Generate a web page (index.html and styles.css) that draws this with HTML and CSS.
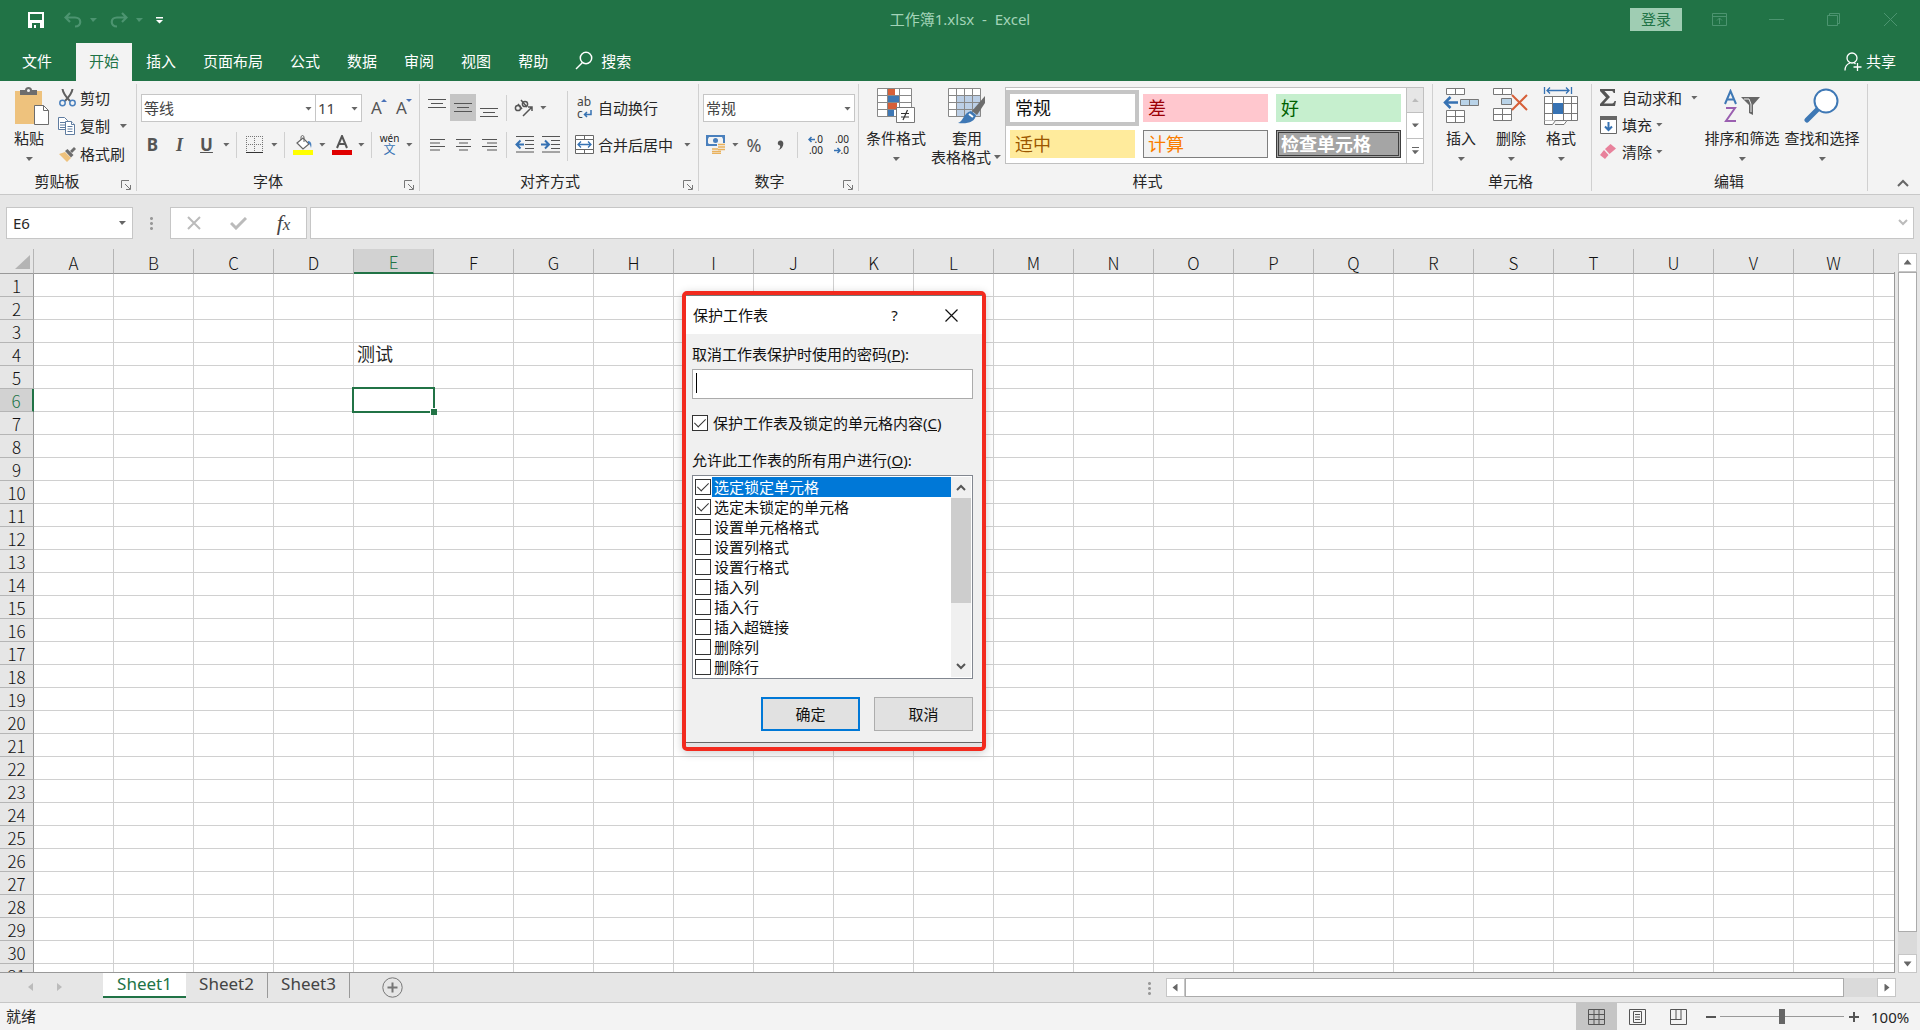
FILE: index.html
```html
<!DOCTYPE html>
<html lang="zh-CN">
<head>
  <meta charset="UTF-8">
  <title>工作簿1.xlsx - Excel</title>
  <meta name="viewport" content="width=device-width, initial-scale=1.0">
  <link rel="stylesheet" href="styles.css">
</head>
<body>
  <header class="titlebar">
    <div class="quick-access">
      <button class="quick save" aria-label="保存"><svg width="16" height="16" viewBox="0 0 16 16"><path d="M0 0h16v16H0z M2 2v6h12V2z M4 11v5h2v-3h2v3h4v-5z" fill="#fff" fill-rule="evenodd"/></svg></button>
      <button class="quick" aria-label="撤消"><svg width="18" height="16" viewBox="0 0 18 16"><path d="M6 1L1.500 5.500L6 10M2 5.500h9c7 0 7 9 0 9" fill="none" stroke="#4c9470" stroke-width="2.200"/></svg></button>
      <span class="caret dim"></span>
      <button class="quick" aria-label="恢复"><svg width="18" height="16" viewBox="0 0 18 16"><path d="M12 1l4.500 4.500L12 10M16 5.500H7c-7 0-7 9 0 9" fill="none" stroke="#4c9470" stroke-width="2.200"/></svg></button>
      <span class="caret dim"></span>
      <button class="quick" aria-label="自定义快速访问工具栏"><svg width="7" height="7" viewBox="0 0 7 7"><path d="M0 0h7v1.500H0zM0 3h7L3.500 6.500z" fill="#fff"/></svg></button>
    </div>
    <div class="doc-title">工作簿1.xlsx&nbsp; -&nbsp; Excel</div>
    <div class="window-controls">
      <button class="login">登录</button>
      <button class="win" aria-label="功能区显示选项"><svg width="15" height="13" viewBox="0 0 15 13" fill="none" stroke="#4c9470"><path d="M.5.5h14v12H.5zM.5 3.500h14M7.500 11V5M5 7.500L7.500 5L10 7.500"/></svg></button>
      <button class="win" aria-label="最小化"><svg width="15" height="13" viewBox="0 0 15 13" stroke="#4c9470"><path d="M0 6.500h15"/></svg></button>
      <button class="win" aria-label="还原"><svg width="13" height="13" viewBox="0 0 13 13" fill="none" stroke="#4c9470"><path d="M.5 2.500h10v10H.5zM2.500 2.500v-2h10v10h-2"/></svg></button>
      <button class="win" aria-label="关闭"><svg width="13" height="13" viewBox="0 0 13 13" stroke="#4c9470"><path d="M0 0l13 13M13 0L0 13"/></svg></button>
    </div>
  </header>

  <nav class="tabs">
    <a href="#" class="tab file">文件</a>
    <a href="#" class="tab active">开始</a>
    <a href="#" class="tab">插入</a>
    <a href="#" class="tab">页面布局</a>
    <a href="#" class="tab">公式</a>
    <a href="#" class="tab">数据</a>
    <a href="#" class="tab">审阅</a>
    <a href="#" class="tab">视图</a>
    <a href="#" class="tab">帮助</a>
    <a href="#" class="tab search"><svg width="18" height="19" viewBox="0 0 18 19" fill="none" stroke="#fff" stroke-width="1.500"><circle cx="11" cy="7" r="5.700"/><path d="M7.500 11.500L1 18"/></svg>搜索</a>
    <a href="#" class="share"><svg width="18" height="19" viewBox="0 0 18 19" fill="none" stroke="#fff" stroke-width="1.300"><circle cx="8" cy="6" r="5"/><path d="M1 18.500c0-4 2-6.500 5-7.500M10 10.500l1.500 1.500M13.500 11v8M9.500 15h8"/></svg>共享</a>
  </nav>

  <section class="ribbon">
    <div class="group clipboard">
      <div class="group-body">
        <button class="big paste">
          <span class="big-icon"><svg width="36" height="39" viewBox="0 0 36 39"><path d="M1 4h27v33H1z" fill="#eec27d"/><path d="M6 3h5c0-4 7-4 7 0h5v5H6z" fill="#6d6d6d"/><circle cx="14.500" cy="3.500" r="1.500" fill="#f3f3f3"/><path d="M20.500 18.500h9l5 5v14h-14z" fill="#fff" stroke="#6d6d6d"/><path d="M29.500 18.500v5h5" fill="none" stroke="#6d6d6d"/></svg></span>
          <span>粘贴</span>
          <span class="caret"></span>
        </button>
        <div class="small-list">
          <button class="small"><span class="small-icon"><svg width="17" height="18" viewBox="0 0 17 18" fill="none"><path d="M3.500 0C4 4 7 8 11 12M13.500 0C13 4 10 8 6 12" stroke="#5f5f5f" stroke-width="2"/><circle cx="3.500" cy="14" r="2.700" stroke="#4a80bd" stroke-width="1.500"/><circle cx="13.500" cy="14" r="2.700" stroke="#4a80bd" stroke-width="1.500"/></svg></span>剪切</button>
          <button class="small"><span class="small-icon"><svg width="18" height="18" viewBox="0 0 18 18" fill="#fff" stroke="#5f7ca0"><path d="M.5.5h6l3 3v9h-9zM2 5.500h5M2 8h5M2 10.500h5"/><path d="M7.500 4.500h6l3 3v10h-9z"/><path d="M13.500 4.500v3h3M9.500 9.500h5M9.500 12h5M9.500 14.500h5"/></svg></span>复制<span class="caret"></span></button>
          <button class="small"><span class="small-icon"><svg width="17" height="15" viewBox="0 0 17 15"><path d="M0 7l6-2 6 6-4 4z" fill="#eec27d"/><path d="M6 4l2.500-2 6 6L12 10.500z" fill="#6d6d6d"/><path d="M11 4l4-4 2 2-4 4z" fill="#6d6d6d"/></svg></span>格式刷</button>
        </div>
      </div>
      <div class="group-name">剪贴板<button class="launcher" aria-label="剪贴板选项"><svg width="10" height="10" viewBox="0 0 10 10" fill="none" stroke="#777"><path d="M.5 8V.5H8M4 4l5 5M9.500 5v4.500H5"/></svg></button></div>
    </div>

    <div class="group font">
      <div class="group-body rows">
        <div class="row">
          <span class="combo font-name"><select aria-label="字体"><option>等线</option></select></span><span class="combo font-size"><select aria-label="字号"><option>11</option></select></span>
          <button class="tool sizer" aria-label="增大字号"><span class="glyph">A</span><span class="grow"></span></button>
          <button class="tool sizer" aria-label="减小字号"><span class="glyph">A</span><span class="shrink"></span></button>
        </div>
        <div class="row">
          <button class="tool glyph heavy">B</button>
          <button class="tool glyph italic">I</button>
          <button class="tool glyph under">U</button>
          <span class="caret"></span><span class="sep"></span>
          <button class="tool" aria-label="边框"><svg width="18" height="18" viewBox="0 0 18 18" fill="none" stroke="#777"><path d="M.5 0v16M8.500 0v16M16.500 0v16M0 .5h17M0 8.500h17" stroke-dasharray="1 1"/><path d="M0 16.500h17" stroke="#333"/></svg></button>
          <span class="caret"></span><span class="sep"></span>
          <button class="tool" aria-label="填充颜色"><svg width="20" height="20" viewBox="0 0 20 20"><path d="M0 15h20v5H0z" fill="#ff0"/><path d="M4 8l6-5 6 6-6 5z" fill="#fff" stroke="#666" stroke-width="1.200"/><path d="M8 5V1.500q1.500-2 3 0V7" fill="none" stroke="#666"/><path d="M15 6c3 0 4 3 3 7-1-3-1-4-3-5z" fill="#4a80bd"/></svg></button>
          <span class="caret"></span>
          <button class="tool" aria-label="字体颜色"><svg width="20" height="20" viewBox="0 0 20 20"><path d="M0 15h20v5H0z" fill="#e00000"/><path d="M5 13l5-12 5 12M7 9h6" fill="none" stroke="#555" stroke-width="2"/></svg></button>
          <span class="caret"></span><span class="sep"></span>
          <button class="tool phonetic"><span>wén</span><span class="wen">文</span></button>
          <span class="caret"></span>
        </div>
      </div>
      <div class="group-name">字体<button class="launcher" aria-label="字体选项"><svg width="10" height="10" viewBox="0 0 10 10" fill="none" stroke="#777"><path d="M.5 8V.5H8M4 4l5 5M9.500 5v4.500H5"/></svg></button></div>
    </div>

    <div class="group align">
      <div class="group-body">
        <div class="rows">
          <div class="row">
            <button class="tool" aria-label="顶端对齐"><svg width="18" height="20" viewBox="0 0 18 20" stroke="#555"><path d="M0 1.500h18M3 5.500h12M0 9.500h18"/></svg></button>
            <button class="tool pressed" aria-label="垂直居中"><svg width="18" height="20" viewBox="0 0 18 20" stroke="#555"><path d="M0 5.500h18M3 9.500h12M0 13.500h18"/></svg></button>
            <button class="tool" aria-label="底端对齐"><svg width="18" height="20" viewBox="0 0 18 20" stroke="#555"><path d="M0 10.500h18M3 14.500h12M0 18.500h18"/></svg></button>
            <span class="sep"></span>
            <button class="tool" aria-label="方向"><svg width="20" height="18" viewBox="0 0 20 18" fill="none" stroke="#555" stroke-width="1.500"><circle cx="4" cy="9" r="2.600"/><path d="M4 5l4 5M7 1l6 7M9 17L18 8M14 8h4v4"/><circle cx="11" cy="5" r="2.600"/></svg></button>
            <span class="caret"></span>
          </div>
          <div class="row">
            <button class="tool" aria-label="左对齐"><svg width="15" height="12" viewBox="0 0 15 12" stroke="#555"><path d="M0 .5h15M0 4h10M0 7.500h15M0 11h10"/></svg></button>
            <button class="tool" aria-label="居中"><svg width="15" height="12" viewBox="0 0 15 12" stroke="#555"><path d="M0 .5h15M3 4h9M0 7.500h15M3 11h9"/></svg></button>
            <button class="tool" aria-label="右对齐"><svg width="15" height="12" viewBox="0 0 15 12" stroke="#555"><path d="M0 .5h15M5 4h10M0 7.500h15M5 11h10"/></svg></button>
            <span class="sep"></span>
            <button class="tool" aria-label="减少缩进量"><svg width="19" height="17" viewBox="0 0 19 17" stroke="#555" fill="none"><path d="M1 .5h18M10 4.500h9M10 8.500h9M10 12.500h9M1 16h18"/><path d="M9 8.500H2M5.500 4.500l-4 4 4 4" stroke="#3672b3" stroke-width="2"/></svg></button>
            <button class="tool" aria-label="增加缩进量"><svg width="19" height="17" viewBox="0 0 19 17" stroke="#555" fill="none"><path d="M1 .5h18M10 4.500h9M10 8.500h9M10 12.500h9M1 16h18"/><path d="M0 8.500h7M4 4.500l4 4-4 4" stroke="#3672b3" stroke-width="2"/></svg></button>
          </div>
        </div>
        <span class="sep tall"></span>
        <div class="rows wrap-rows">
          <div class="row"><button class="small wide"><span class="small-icon wrap-icon"><span>ab</span><span>c<svg width="9" height="8" viewBox="0 0 9 8" fill="none" stroke="#3672b3" stroke-width="1.500"><path d="M8 0v4.500H1.500M4 2L1.500 4.500L4 7"/></svg></span></span>自动换行</button></div>
          <div class="row"><button class="small wide"><span class="small-icon"><svg width="19" height="19" viewBox="0 0 19 19" fill="#fff" stroke="#666"><path d="M.5.5h18v18H.5zM9.500.5v4M9.500 14.500v4"/><path d="M.5 4.500h18v10H.5z"/><path d="M3 9.500h13M6 6.500l-3 3 3 3M13 6.500l3 3-3 3" fill="none" stroke="#3672b3" stroke-width="1.300"/></svg></span>合并后居中<span class="caret"></span></button></div>
        </div>
      </div>
      <div class="group-name">对齐方式<button class="launcher" aria-label="对齐选项"><svg width="10" height="10" viewBox="0 0 10 10" fill="none" stroke="#777"><path d="M.5 8V.5H8M4 4l5 5M9.500 5v4.500H5"/></svg></button></div>
    </div>

    <div class="group number">
      <div class="group-body rows">
        <div class="row"><span class="combo number-format"><select aria-label="数字格式"><option>常规</option></select></span></div>
        <div class="row">
          <button class="tool" aria-label="会计数字格式"><svg width="20" height="19" viewBox="0 0 20 19"><path d="M0 0h19v11H0z" fill="#4a80bd"/><path d="M3 2h13l1 2v4l-1 1H3L2 8V4z" fill="#f3f3f3"/><circle cx="9.500" cy="5.500" r="2.500" fill="#4a80bd"/><path d="M11 8h8v9h-4v2H6v-6h5z" fill="#f3f3f3"/><path d="M12 9.500h7M12 12h7M12 14.500h7M6 14h6M6 16.500h9M6 18.500h9" stroke="#e9b15c" stroke-width="1.500"/></svg></button>
          <span class="caret"></span>
          <button class="tool percent">%</button>
          <button class="tool" aria-label="千位分隔样式"><svg width="7" height="10" viewBox="0 0 7 10"><path d="M1 10c2-1 2.500-3 2-4.500C-.500 5 .500.500 3.500.500c4.500 0 3.500 8-2 9.500z" fill="#555"/></svg></button>
          <span class="sep"></span>
          <button class="tool decimals" aria-label="增加小数位数"><span><svg width="7" height="7" viewBox="0 0 7 7" fill="none" stroke="#3672b3" stroke-width="1.500"><path d="M7 3.500H1M3.500 1L1 3.500L3.500 6"/></svg>.0</span><span>.00</span></button>
          <button class="tool decimals" aria-label="减少小数位数"><span>.00</span><span><svg width="7" height="7" viewBox="0 0 7 7" fill="none" stroke="#3672b3" stroke-width="1.500"><path d="M0 3.500h6M3.500 1L6 3.500L3.500 6"/></svg>.0</span></button>
        </div>
      </div>
      <div class="group-name">数字<button class="launcher" aria-label="数字选项"><svg width="10" height="10" viewBox="0 0 10 10" fill="none" stroke="#777"><path d="M.5 8V.5H8M4 4l5 5M9.500 5v4.500H5"/></svg></button></div>
    </div>

    <div class="group styles">
      <div class="group-body">
        <button class="big conditional">
          <span class="big-icon"><svg width="38" height="36" viewBox="0 0 38 36"><path d="M.5.5h34v28H.5z" fill="#fff"/><path d="M11 0h7v7h-7zM11 14h9v7h-9z" fill="#d65f38"/><path d="M11 7h11v7H11zM11 21h6v7h-6z" fill="#3e78b5"/><path d="M.5.5h34v28H.5zM10.500.5v28M22.500.5v28M.5 7.500h34M.5 14.500h34M.5 21.500h34" fill="none" stroke="#888"/><path d="M19.500 19.500h18v15h-18z" fill="#fff" stroke="#777"/><path d="M24 25.500h8M24 29h8M30.500 22L26 32" stroke="#333" stroke-width="1.200"/></svg></span>
          <span>条件格式</span>
          <span class="caret"></span>
        </button>
        <button class="big table-format">
          <span class="big-icon"><svg width="38" height="36" viewBox="0 0 38 36"><path d="M.5.5h32v28H.5z" fill="#fff"/><path d="M8.500 7.500h24v21h-24z" fill="#bccfe6"/><path d="M.5.5h32v28H.5zM8.500.5v28M16.500.5v28M24.500.5v28M.5 7.500h32M.5 14.500h32M.5 21.500h32" fill="none" stroke="#888"/><path d="M37 8v7l-8 12-5-4z" fill="#6d6d6d"/><path d="M23 23l5 4c-1 7-8 9-18 8 6-2 5-10 13-12z" fill="#3e78b5"/><path d="M21 26l4 3" stroke="#fff" stroke-width="2"/></svg></span>
          <span>套用</span>
          <span class="second-line">表格格式<span class="caret"></span></span>
        </button>
        <div class="gallery">
          <div class="gallery-cells">
            <button class="swatch selected">常规</button>
            <button class="swatch bad">差</button>
            <button class="swatch good">好</button>
            <button class="swatch neutral">适中</button>
            <button class="swatch calc">计算</button>
            <button class="swatch check">检查单元格</button>
          </div>
          <div class="gallery-scroll">
            <button class="off" aria-label="上一行"><span class="caret up"></span></button>
            <button aria-label="下一行"><span class="caret"></span></button>
            <button class="more" aria-label="其他"><span class="caret"></span></button>
          </div>
        </div>
      </div>
      <div class="group-name">样式</div>
    </div>

    <div class="group cells">
      <div class="group-body">
        <button class="big">
          <span class="big-icon"><svg width="36" height="36" viewBox="0 0 36 36" fill="#fff" stroke="#777"><path d="M3.500.5h18v6h-18zM12.500.5v6M3.500 22.500h18v12h-18zM12.500 22.500v12M3.500 28.500h18"/><path d="M17.500 11.500h18v6h-18zM26.500 11.500v6" fill="#b9d3e8"/><path d="M15 14.500H2M7.500 9l-5.500 5.500L7.500 20" fill="none" stroke="#3672b3" stroke-width="2.500"/></svg></span>
          <span>插入</span>
          <span class="caret"></span>
        </button>
        <button class="big">
          <span class="big-icon"><svg width="36" height="36" viewBox="0 0 36 36" fill="#fff" stroke="#777"><path d="M.5.5h18v6H.5zM9.500.5v6M.5 20.500h18v12H.5zM9.500 20.500v12M.5 26.500h18"/><path d="M8.500 10.500h10v6h-10z" fill="#b9d3e8"/><path d="M19 7l15 15M34 7L19 22" fill="none" stroke="#d65f38" stroke-width="2"/></svg></span>
          <span>删除</span>
          <span class="caret"></span>
        </button>
        <button class="big">
          <span class="big-icon"><svg width="36" height="38" viewBox="0 0 36 38" fill="#fff" stroke="#777"><path d="M1.500 9.500h33v24h-33zM9.500 9.500v24M20.500 9.500v24M28.500 9.500v24M1.500 16.500h33M1.500 26.500h33"/><path d="M10 16h10v11H10z" fill="#3672b3" stroke="none"/><path d="M1.500 33.500v4h8l3-4M12 37.500h9l3-4" /><path d="M1.500 0v7M28.500 0v7M4 3.500h22M7 .5l-3 3 3 3M23 .5l3 3-3 3" fill="none" stroke="#3672b3" stroke-width="1.300"/></svg></span>
          <span>格式</span>
          <span class="caret"></span>
        </button>
      </div>
      <div class="group-name">单元格</div>
    </div>

    <div class="group editing">
      <div class="group-body">
        <div class="small-list edit-list">
          <button class="small"><span class="small-icon"><svg width="16" height="17" viewBox="0 0 16 17"><path d="M0 0h15v4h-1.500c0-1.500-1-2-2.500-2H4.500L10 8l-6 6.500h7c2 0 3-.500 3.500-2.500H16l-1 5H0v-2l6-6.500L0 2z" fill="#555"/></svg></span>自动求和<span class="caret"></span></button>
          <button class="small"><span class="small-icon"><svg width="17" height="18" viewBox="0 0 17 18"><path d="M.5 1.500h16v16H.5z" fill="#fff" stroke="#666"/><path d="M0 0h17v4H0z" fill="#666"/><path d="M8.500 6v8M5 10.500L8.500 14L12 10.500" fill="none" stroke="#3672b3" stroke-width="2"/></svg></span>填充<span class="caret"></span></button>
          <button class="small"><span class="small-icon"><svg width="16" height="15" viewBox="0 0 16 15"><path d="M10.500 0L16 4.500L9.500 10L5 5z" fill="#e8819b"/><path d="M4 6l4.500 5L5 15 0 11z" fill="#e8819b"/></svg></span>清除<span class="caret"></span></button>
        </div>
        <button class="big sort">
          <span class="big-icon"><svg width="36" height="34" viewBox="0 0 36 34" fill="none"><path d="M1 15L6.500 2L12 15M3 10.500h7" stroke="#3e78b5" stroke-width="2"/><path d="M2 19h9L2 32h10" stroke="#9a5fb0" stroke-width="2"/><path d="M17 8h19l-7 8v10l-4-2v-8z" fill="#666"/><path d="M20 10h5l2 5v8" stroke="#eee"/></svg></span>
          <span>排序和筛选</span>
          <span class="caret"></span>
        </button>
        <button class="big find">
          <span class="big-icon"><svg width="36" height="36" viewBox="0 0 36 36"><path d="M14 21L3 32" stroke="#3e78b5" stroke-width="5" stroke-linecap="round"/><circle cx="22" cy="13" r="11.500" fill="#fff" stroke="#3e78b5" stroke-width="2"/></svg></span>
          <span>查找和选择</span>
          <span class="caret"></span>
        </button>
      </div>
      <div class="group-name">编辑</div>
    </div>
    <button class="collapse" aria-label="折叠功能区"><svg width="12" height="8" viewBox="0 0 12 8" fill="none" stroke="#666" stroke-width="2"><path d="M1 7l5-5 5 5"/></svg></button>
  </section>

  <section class="formula-bar">
    <div class="name-box"><input type="text" value="E6" aria-label="名称框"><span class="caret"></span></div>
    <span class="dots"></span>
    <div class="fx-buttons">
      <button aria-label="取消"><svg width="14" height="14" viewBox="0 0 14 14" stroke="#bbb" stroke-width="2"><path d="M1 1l12 12M13 1L1 13"/></svg></button>
      <button aria-label="输入"><svg width="17" height="13" viewBox="0 0 17 13" fill="none" stroke="#bbb" stroke-width="3"><path d="M1 6l5 5L16 1"/></svg></button>
      <button class="fx" aria-label="插入函数"><i>f</i><i class="sub">x</i></button>
    </div>
    <div class="formula"><input type="text" aria-label="编辑栏"><svg width="10" height="8" viewBox="0 0 10 8" fill="none" stroke="#bbb" stroke-width="2"><path d="M1 1l4 4 4-4"/></svg></div>
  </section>

  <main class="sheet">
    <div class="grid"><table id="cells"></table></div>
    <div class="vscroll">
      <button aria-label="向上滚动"><span class="arrow up"></span></button>
      <div class="thumb"></div>
      <div class="track"></div>
      <button aria-label="向下滚动"><span class="arrow down"></span></button>
    </div>
  </main>

  <section class="sheet-bar">
    <div class="sheet-nav"><span class="arrow left"></span><span class="arrow right"></span></div>
    <a href="#" class="sheet-tab current">Sheet1</a>
    <a href="#" class="sheet-tab">Sheet2</a>
    <a href="#" class="sheet-tab">Sheet3</a>
    <button class="add-sheet" aria-label="新工作表"><svg width="21" height="21" viewBox="0 0 21 21" fill="none" stroke="#777"><circle cx="10.500" cy="10.500" r="9.700"/><path d="M10.500 5.500v10M5.500 10.500h10" stroke-width="2"/></svg></button>
    <span class="dots"></span>
    <div class="hscroll">
      <button aria-label="向左滚动"><span class="arrow left"></span></button>
      <div class="thumb"></div>
      <div class="track"></div>
      <button aria-label="向右滚动"><span class="arrow right"></span></button>
    </div>
  </section>

  <footer class="status">
    <span class="ready">就绪</span>
    <button class="view on" aria-label="普通"><svg width="17" height="16" viewBox="0 0 17 16" fill="none" stroke="#555"><path d="M.5.5h16v15H.5zM6 .5v15M11 .5v15M.5 5.500h16M.5 10.500h16"/></svg></button>
    <button class="view" aria-label="页面布局"><svg width="17" height="16" viewBox="0 0 17 16" fill="none" stroke="#555"><path d="M.5.5h16v15H.5zM4.500 2.500h8v11h-8zM6 5.500h5M6 8h5M6 10.500h5"/></svg></button>
    <button class="view" aria-label="分页预览"><svg width="17" height="16" viewBox="0 0 17 16" fill="none" stroke="#555"><path d="M.5.5h16v15H.5zM6 .5v10M11 .5v10M.5 10.500h11"/></svg></button>
    <div class="zoom">
      <button aria-label="缩小"><svg width="10" height="10" viewBox="0 0 10 10" stroke="#555" stroke-width="2"><path d="M0 5h10"/></svg></button>
      <input type="range" min="10" max="190" value="100" aria-label="缩放">
      <button aria-label="放大"><svg width="10" height="10" viewBox="0 0 10 10" stroke="#555" stroke-width="2"><path d="M0 5h10M5 0v10"/></svg></button>
      <span class="zoom-value">100%</span>
    </div>
  </footer>

  <form class="dialog" role="dialog" aria-labelledby="dialogTitle">
    <div class="dialog-title">
      <span id="dialogTitle">保护工作表</span>
      <button type="button" class="help">?</button>
      <button type="button" class="close" aria-label="关闭"><svg width="13" height="13" viewBox="0 0 13 13" stroke="#111" stroke-width="1.200"><path d="M.5.5l12 12M12.500.5l-12 12"/></svg></button>
    </div>
    <div class="dialog-body">
      <label for="password">取消工作表保护时使用的密码(<u>P</u>):</label>
      <div class="password-box"><span class="cursor"></span><input type="password" id="password"></div>
      <label class="protect"><input type="checkbox" checked>保护工作表及锁定的单元格内容(<u>C</u>)</label>
      <div class="allow" id="allowLabel">允许此工作表的所有用户进行(<u>O</u>):</div>
      <div class="permissions" role="group" aria-labelledby="allowLabel">
        <div class="permission-list">
          <label class="picked"><input type="checkbox" checked><span>选定锁定单元格</span></label>
          <label><input type="checkbox" checked><span>选定未锁定的单元格</span></label>
          <label><input type="checkbox"><span>设置单元格格式</span></label>
          <label><input type="checkbox"><span>设置列格式</span></label>
          <label><input type="checkbox"><span>设置行格式</span></label>
          <label><input type="checkbox"><span>插入列</span></label>
          <label><input type="checkbox"><span>插入行</span></label>
          <label><input type="checkbox"><span>插入超链接</span></label>
          <label><input type="checkbox"><span>删除列</span></label>
          <label><input type="checkbox"><span>删除行</span></label>
        </div>
        <div class="list-scroll">
          <button type="button" aria-label="向上"><svg width="10" height="7" viewBox="0 0 10 7" fill="none" stroke="#555" stroke-width="2"><path d="M1 6l4-4 4 4"/></svg></button>
          <div class="list-thumb"></div>
          <button type="button" aria-label="向下"><svg width="10" height="7" viewBox="0 0 10 7" fill="none" stroke="#555" stroke-width="2"><path d="M1 1l4 4 4-4"/></svg></button>
        </div>
      </div>
      <div class="dialog-buttons">
        <button type="button" class="ok">确定</button>
        <button type="button">取消</button>
      </div>
    </div>
  </form>

  <script src="script.js"></script>
</body>
</html>
```

FILE: styles.css
```css
* {
  box-sizing: border-box;
}
body {
  margin: 0;
  height: 100vh;
  display: flex;
  flex-direction: column;
  overflow: hidden;
  background-color: #e6e6e6;
  color: #262626;
  font-family: "Noto Sans", "Noto Sans CJK SC", sans-serif;
  font-size: 15px;
  line-height: 20px;
}
button, input, select {
  font: inherit;
  color: inherit;
  margin: 0;
  padding: 0;
  border: none;
  background: none;
}
button {
  display: flex;
  align-items: center;
  justify-content: center;
}
a {
  color: inherit;
  text-decoration: none;
}
svg {
  display: block;
  flex: none;
}

/* small drop-down arrows */
.caret {
  flex: none;
  width: 12px;
  height: 4px;
  background-color: #666;
  clip-path: polygon(3px 0, 10px 0, 6px 4px);
}
.caret.up {
  background-color: #bbb;
  clip-path: polygon(3px 4px, 10px 4px, 6px 0);
}
.caret.dim {
  background-color: #4c9470;
}
.arrow {
  width: 8px;
  height: 8px;
  background-color: #666;
}
.arrow.up { clip-path: polygon(0 6px, 8px 6px, 4px 1px); }
.arrow.down { clip-path: polygon(0 2px, 8px 2px, 4px 7px); }
.arrow.left { clip-path: polygon(6px 0, 6px 8px, 1px 4px); }
.arrow.right { clip-path: polygon(2px 0, 2px 8px, 7px 4px); }

/* title bar */
.titlebar {
  display: grid;
  grid-template-columns: 1fr auto 1fr;
  align-items: center;
  height: 38px;
  background-color: #217346;
}
.quick-access {
  display: flex;
  align-items: center;
  padding: 2px 0 0 28px;
}
.quick + .quick {
  margin-left: 20px;
}
.quick-access .caret {
  margin: 0 11px 0 5px;
}
.doc-title {
  color: #a3d3b8;
}
.window-controls {
  display: flex;
  justify-content: flex-end;
  align-items: center;
  padding-right: 1px;
}
.login {
  width: 52px;
  height: 23px;
  margin-right: 9px;
  background-color: #9fcdb3;
  color: #217346;
}
.win {
  width: 57px;
  height: 30px;
}

/* ribbon tabs */
.tabs {
  display: flex;
  align-items: stretch;
  gap: 1px;
  height: 43px;
  padding-top: 5px;
  background-color: #217346;
  color: #fff;
}
.tab {
  display: flex;
  align-items: center;
  padding: 0 13px 3px;
}
.tab.file {
  padding: 0 23px 3px 22px;
}
.tab.active {
  background-color: #f3f3f3;
  color: #217346;
}
.tab.search {
  gap: 8px;
}
.share {
  display: flex;
  align-items: center;
  gap: 4px;
  margin-left: auto;
  padding: 0 24px 2px 0;
}

/* ribbon */
.ribbon {
  display: flex;
  padding: 3px 0;
  background-color: #f3f3f3;
  border-bottom: 1px solid #c8c8c8;
}
.group {
  display: flex;
  flex-direction: column;
  flex: none;
  height: 107px;
  border-right: 1px solid #d0d0d0;
}
.group-body {
  display: flex;
  flex: 1;
}
.group-name {
  position: relative;
  padding-bottom: 2px;
  line-height: 16px;
  text-align: center;
}
.launcher {
  position: absolute;
  right: 5px;
  bottom: 1px;
}
.rows {
  display: flex;
  flex-direction: column;
  gap: 10px;
  padding-top: 10px;
}
.row {
  display: flex;
  align-items: center;
  height: 27px;
}
.big {
  flex-direction: column;
  justify-content: flex-start;
  width: 50px;
  line-height: 20px;
  white-space: nowrap;
}
.big-icon {
  display: flex;
  align-items: center;
  justify-content: center;
  height: 44px;
}
.big > .caret {
  margin-top: 9px;
}
.small {
  height: 28px;
  justify-content: flex-start;
  white-space: nowrap;
}
.small-icon {
  display: flex;
  align-items: center;
  justify-content: center;
  width: 18px;
  margin-right: 4px;
}
.sep {
  flex: none;
  width: 1px;
  height: 26px;
  margin: 0 4px;
  background-color: #d0d0d0;
}
.sep.tall {
  height: 70px;
  margin: 7px 4px 0;
}
.tool {
  flex: none;
  width: 26px;
  height: 27px;
  position: relative;
}
.tool.pressed {
  background-color: #c5c5c5;
}
.glyph {
  font-size: 17px;
  color: #555;
}
.heavy {
  font-weight: bold;
}
.italic {
  font-family: "Liberation Serif", serif;
  font-style: italic;
  font-weight: bold;
  font-size: 18px;
}
.under {
  font-weight: bold;
  text-decoration: underline;
}
.combo {
  position: relative;
  display: block;
}
.combo select {
  appearance: none;
  width: 100%;
  height: 28px;
  padding-left: 2px;
  background-color: #fff;
  border: 1px solid #c6c6c6;
  border-radius: 0;
  color: #444;
}
.combo::after {
  content: "";
  position: absolute;
  right: 4px;
  top: 13px;
  width: 7px;
  height: 4px;
  background-color: #666;
  clip-path: polygon(0 0, 100% 0, 50% 100%);
}
.clipboard {
  width: 137px;
}
.clipboard .group-body {
  padding-left: 4px;
}
.paste .big-icon {
  padding-left: 6px;
}
.paste + .small-list {
  padding-left: 4px;
}
.clipboard .group-name {
  padding-right: 22px;
}
.clipboard .small .caret {
  margin-left: 7px;
}
.font {
  width: 283px;
}
.font .tool {
  width: 27px;
}
.font .row {
  padding-left: 2px;
}
.font-name {
  width: 175px;
  margin-left: 2px;
}
.font-size {
  width: 47px;
  margin: 0 2px 0 -1px;
}
.font .sizer {
  width: 25px;
}
.font .group-name {
  padding-right: 20px;
}
.grow, .shrink {
  position: absolute;
  top: 5px;
  right: 2px;
  width: 6px;
  height: 3px;
  background-color: #4a72b8;
}
.grow { clip-path: polygon(0 100%, 100% 100%, 50% 0); }
.shrink { clip-path: polygon(0 0, 100% 0, 50% 100%); }
.phonetic {
  flex-direction: column;
  font-size: 10px;
  line-height: 10px;
}
.wen {
  font-size: 12px;
  line-height: 14px;
  color: #3672b3;
}
.align {
  width: 279px;
  padding-left: 4px;
}
.align .rows:first-child {
  width: 139px;
}
.wrap-rows {
  padding-left: 2px;
}
.wide .small-icon {
  width: 20px;
}
.wide .caret {
  margin-left: 8px;
}
.align .group-name, .number .group-name {
  padding-right: 22px;
}
.wrap-icon {
  flex-direction: column;
  align-items: flex-start;
  padding-left: 3px;
  font-size: 12px;
  line-height: 12px;
  color: #444;
}
.wrap-icon span {
  display: flex;
  align-items: center;
}
.number {
  width: 160px;
  padding-left: 4px;
}
.number-format {
  width: 152px;
}
.percent {
  font-size: 18px;
  color: #555;
}
.decimals {
  flex-direction: column;
  align-items: flex-end;
  padding-right: 5px;
  font-size: 10px;
  line-height: 11px;
}
.decimals span {
  display: flex;
  align-items: center;
}
.styles {
  width: 574px;
  padding-left: 4px;
}
.conditional {
  width: 66px;
}
.table-format {
  width: 76px;
}
.second-line {
  display: flex;
  align-items: center;
  line-height: 18px;
}

/* cell style gallery */
.gallery {
  display: flex;
  align-self: flex-start;
  margin-top: 3px;
  border: 1px solid #c0c0c0;
  background-color: #fff;
}
.gallery-cells {
  display: grid;
  grid-template-columns: repeat(3, 133px);
  grid-auto-rows: 36px;
  padding: 2px 1px 1px 0;
}
.swatch {
  justify-content: flex-start;
  margin: 4px;
  padding-left: 5px;
  font-size: 18px;
  line-height: 24px;
}
.selected {
  margin: 0;
  border: 4px solid #c5c5c5;
  color: #111;
}
.bad { background-color: #ffc7ce; color: #9c0006; }
.good { background-color: #c6efce; color: #006100; }
.neutral { background-color: #ffeb9c; color: #9c5700; }
.calc {
  padding-left: 4px;
  border: 1px solid #7f7f7f;
  background-color: #f2f2f2;
  color: #fa7d00;
}
.check {
  padding-left: 2px;
  border: 3px double #3f3f3f;
  background-color: #a5a5a5;
  color: #fff;
  font-weight: bold;
}
.gallery-scroll {
  display: flex;
  flex-direction: column;
  width: 17px;
  border-left: 1px solid #c0c0c0;
}
.gallery-scroll button {
  flex: 1;
  border-bottom: 1px solid #c0c0c0;
}
.gallery-scroll .off {
  background-color: #e6e6e6;
}
.gallery-scroll .more {
  flex-direction: column;
  gap: 2px;
  border-bottom: none;
}
.more::before {
  content: "";
  width: 7px;
  height: 1px;
  background-color: #666;
}
.cells {
  width: 159px;
  padding-left: 3px;
}
.cells .group-name {
  padding-right: 6px;
}
.editing {
  width: 276px;
  padding-left: 7px;
}
.editing .group-name {
  padding-right: 8px;
}
.edit-list {
  width: 104px;
}
.edit-list .small {
  height: 27px;
}
.edit-list .small-icon {
  margin-right: 5px;
}
.edit-list .caret {
  margin-left: 1px;
}
.edit-list .small:first-child .caret {
  margin-left: 6px;
}
.sort {
  width: 78px;
}
.find {
  width: 82px;
}
.collapse {
  align-self: flex-end;
  margin: 0 11px 4px auto;
}

/* name box and formula */
.formula-bar {
  display: flex;
  padding: 12px 6px 10px;
}
.name-box, .fx-buttons, .formula {
  display: flex;
  align-items: center;
  height: 32px;
  background-color: #fff;
  border: 1px solid #c6c6c6;
}
.name-box {
  width: 127px;
  padding: 0 4px 0 6px;
}
.name-box input, .formula input {
  flex: 1;
  min-width: 0;
  outline: none;
}
.dots {
  width: 3px;
  height: 14px;
  background: radial-gradient(circle, #999 1px, transparent 2px) 0 0 / 3px 5px;
}
.formula-bar .dots {
  margin: 9px 17px;
}
.fx-buttons {
  width: 137px;
  margin-right: 3px;
}
.fx-buttons button {
  flex: 1;
}
.fx {
  font-family: "Liberation Serif", serif;
  font-size: 22px;
  color: #444;
}
.fx .sub {
  padding-top: 4px;
  font-size: 17px;
}
.formula {
  flex: 1;
  padding: 0 5px 0 8px;
}

/* worksheet */
.sheet {
  display: flex;
  flex: 1;
  min-height: 0;
}
.grid {
  position: relative;
  flex: 1;
  min-width: 0;
  overflow: hidden;
  border-bottom: 1px solid #999;
}
.grid::after {
  content: "";
  position: absolute;
  inset: 23px 0 0 auto;
  border-right: 1px solid #999;
}
.grid table {
  table-layout: fixed;
  width: 1954px;
  border-collapse: separate;
  border-spacing: 0;
  background-color: #fff;
}
.grid th {
  padding: 0;
  border: 0 solid #b5b5b5;
  border-width: 0 1px 1px 0;
  background-color: #e6e6e6;
  font-family: "Noto Sans CJK SC", sans-serif;
  font-size: 17px;
  font-weight: 300;
  line-height: 20px;
  color: #111;
}
.grid thead th {
  width: 80px;
  height: 24px;
  padding-top: 3px;
  border-bottom-color: #999;
}
.grid thead th:first-child {
  width: 34px;
  padding: 5px 3px 3px 15px;
}
.corner {
  height: 14px;
  background-color: #b4b4b4;
  clip-path: polygon(100% 0, 100% 100%, 0 100%);
}
.grid tbody th {
  height: 23px;
  padding-top: 2px;
  border-right-color: #999;
}
.grid td {
  padding: 0 3px;
  border: 0 solid #d0d0d0;
  border-width: 0 1px 1px 0;
  font-size: 18px;
  line-height: 20px;
}
.grid thead .here {
  background-color: #d2d2d2;
  color: #217346;
  border-bottom: 2px solid #217346;
}
.grid tbody .here {
  background-color: #d2d2d2;
  color: #217346;
  border-right: 2px solid #217346;
}
.active-cell {
  position: relative;
}
.active-cell::before {
  content: "";
  position: absolute;
  inset: -2px;
  border: 2px solid #217346;
}
.active-cell::after {
  content: "";
  position: absolute;
  right: -4px;
  bottom: -4px;
  width: 6px;
  height: 6px;
  background-color: #217346;
  border: 1px solid #fff;
  border-width: 1px 0 0 1px;
}
.vscroll {
  display: flex;
  flex-direction: column;
  width: 19px;
  margin: 4px 3px 0 3px;
}
.vscroll button, .hscroll button {
  flex: none;
  width: 19px;
  height: 19px;
  background-color: #fff;
  border: 1px solid #c6c6c6;
}
.thumb {
  flex: 1;
  background-color: #fff;
  border: 1px solid #ababab;
}
.track {
  background-color: #dadada;
}
.vscroll .track {
  height: 22px;
}

/* sheet tabs */
.sheet-bar {
  display: flex;
  align-items: flex-start;
  height: 30px;
  padding-right: 24px;
  border-bottom: 1px solid #c6c6c6;
}
.sheet-nav {
  display: flex;
  gap: 20px;
  width: 103px;
  padding: 10px 0 0 27px;
}
.sheet-nav .arrow {
  background-color: #bbb;
}
.sheet-tab {
  width: 82px;
  height: 25px;
  border-right: 1px solid #999;
  color: #444;
  font-size: 17px;
  line-height: 22px;
  text-align: center;
}
.sheet-tab.current {
  width: 83px;
  border-right: none;
  border-bottom: 2px solid #217346;
  background-color: #fff;
  color: #217346;
}
.add-sheet {
  margin: 4px 0 0 32px;
}
.sheet-bar .dots {
  margin: 8px 15px 0 auto;
}
.hscroll {
  display: flex;
  flex: 0 1 730px;
  margin-top: 5px;
}
.hscroll .track {
  width: 33px;
}

/* status bar */
.status {
  display: flex;
  align-items: center;
  height: 27px;
  background-color: #f3f3f3;
}
.ready {
  margin-right: auto;
  padding: 0 0 2px 6px;
}
.view {
  width: 41px;
  height: 27px;
}
.view.on {
  background-color: #c5c5c5;
}
.zoom {
  display: flex;
  align-items: center;
  width: 221px;
  padding-left: 7px;
}
.zoom input {
  appearance: none;
  width: 124px;
  height: 15px;
  margin: 0 5px 0 4px;
  background: linear-gradient(#999, #999) center / 100% 1px no-repeat;
}
.zoom input::-webkit-slider-thumb {
  appearance: none;
  width: 6px;
  height: 15px;
  background-color: #666;
}
.zoom-value {
  margin-left: 12px;
}

/* protect sheet dialog */
.dialog {
  position: absolute;
  left: 682px;
  top: 291px;
  width: 304px;
  margin: 0;
  padding-bottom: 4px;
  border: 4px solid #f22a1e;
  border-radius: 5px;
  background-color: #e4e4e4;
  color: #111;
  box-shadow: 0 2px 10px rgba(0,0,0,0.2);
}
.dialog-title {
  display: flex;
  align-items: center;
  height: 39px;
  padding-left: 7px;
  background-color: #fff;
  border-top: 1px solid #777;
}
.help {
  width: 57px;
  margin-left: auto;
}
.close {
  width: 57px;
  margin-right: 2px;
}
.dialog-body {
  padding: 10px 9px 11px 6px;
  background-color: #f0f0f0;
  border-bottom: 1px solid #666;
}
.dialog label, .allow {
  display: flex;
  align-items: center;
  height: 20px;
  white-space: nowrap;
}
.password-box {
  display: flex;
  align-items: center;
  height: 30px;
  margin: 5px 0 14px;
  padding-left: 3px;
  background-color: #fff;
  border: 1px solid #ababab;
}
.cursor {
  width: 1px;
  height: 20px;
  margin-bottom: 3px;
  background-color: #000;
}
.password-box input {
  flex: 1;
  min-width: 0;
  outline: none;
}
.dialog input[type="checkbox"] {
  appearance: none;
  flex: none;
  display: flex;
  justify-content: center;
  width: 16px;
  height: 16px;
  margin-right: 5px;
  background-color: #fff;
  border: 1px solid #333;
}
.dialog input[type="checkbox"]:checked::before {
  content: "";
  width: 5px;
  height: 10px;
  border: solid #333;
  border-width: 0 1px 1px 0;
  transform: rotate(45deg);
}
.allow {
  margin: 17px 0 5px;
}
.permissions {
  display: flex;
  padding: 1px;
  background-color: #fff;
  border: 1px solid #828790;
}
.permission-list {
  flex: 1;
}
.permission-list label {
  padding-left: 1px;
}
.dialog .permission-list input {
  margin-right: 1px;
}
.permission-list span {
  flex: 1;
  padding-left: 2px;
}
.picked span {
  background-color: #0078d7;
  color: #fff;
}
.list-scroll {
  display: flex;
  flex-direction: column;
  width: 20px;
  background-color: #f0f0f0;
}
.list-scroll button {
  height: 21px;
}
.list-thumb {
  height: 105px;
  margin-bottom: auto;
  background-color: #cdcdcd;
}
.dialog-buttons {
  display: flex;
  justify-content: flex-end;
  gap: 14px;
  margin-top: 18px;
}
.dialog-buttons button {
  width: 99px;
  height: 34px;
  background-color: #e1e1e1;
  border: 1px solid #adadad;
}
.dialog-buttons .ok {
  border: 2px solid #0078d7;
}
```

FILE: script.js
```js
const columns = "ABCDEFGHIJKLMNOPQRSTUVW".split("");
const rowCount = 31;
const values = { E4: "测试" };
const active = { column: "E", row: 6 };

// one blank column fills the space after the last lettered one
columns.push("");

function buildSheet() {
  const table = document.getElementById("cells");
  const head = table.createTHead().insertRow();
  head.innerHTML = '<th><div class="corner"></div></th>';
  columns.forEach(column => {
    const th = document.createElement("th");
    th.innerText = column;
    if (column === active.column) th.className = "here";
    head.appendChild(th);
  });

  const body = table.createTBody();
  for (let row = 1; row <= rowCount; row++) {
    const tr = body.insertRow();
    const th = document.createElement("th");
    th.innerText = row;
    if (row === active.row) th.className = "here";
    tr.appendChild(th);
    columns.forEach(column => {
      const td = tr.insertCell();
      td.innerText = values[column + row] || "";
      if (column === active.column && row === active.row) td.className = "active-cell";
    });
  }
}

buildSheet();
```
